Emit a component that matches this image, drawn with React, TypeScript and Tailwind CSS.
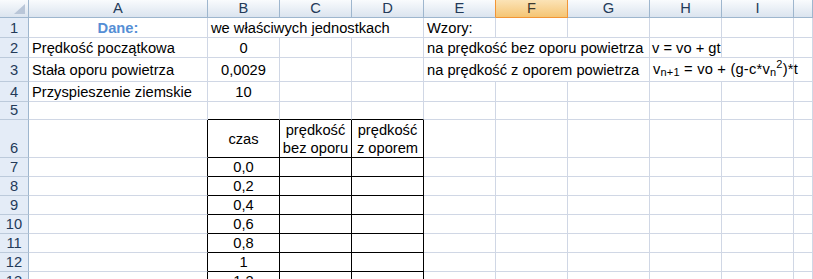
import React from "react";

const H =
  "flex items-center justify-center border-r border-b border-[#9eb6ce] bg-linear-to-b from-[#f9fbfd] to-[#dbe4ef] text-[#233a59] leading-none";
const HF =
  "flex items-center justify-center border-r border-b border-[#f29536] bg-linear-to-b from-[#fbe3b6] to-[#f5c573] text-[#3d3a2f] leading-none";
const HE =
  "flex items-center justify-center border-r border-b border-r-[#f29536] border-b-[#9eb6ce] bg-linear-to-b from-[#f9fbfd] to-[#dbe4ef] text-[#233a59] leading-none";
const R =
  "flex items-end justify-center border-r border-b border-r-[#9eb6ce] border-b-[#bccadb] bg-[#e4ecf7] text-[#233a59] leading-[17px]";
const R3 =
  "flex items-end justify-center border-r border-b border-r-[#9eb6ce] border-b-[#bccadb] bg-[#e4ecf7] text-[#233a59] leading-[17px] pb-[2px]";
const G =
  "flex items-end border-r border-b border-[#d0d7e5] leading-[17px] px-[3px] whitespace-nowrap overflow-hidden";
const G3 =
  "flex items-end border-r border-b border-[#d0d7e5] leading-[17px] px-[3px] pb-[2px] whitespace-nowrap overflow-hidden";
const GF =
  "col-span-2 flex items-end border-r border-b border-[#d0d7e5] leading-[17px] pl-[3px] pb-[2px] whitespace-nowrap";
const GC =
  "flex items-end justify-center border-r border-b border-[#d0d7e5] leading-[17px] whitespace-nowrap overflow-hidden";
const GC3 =
  "flex items-end justify-center border-r border-b border-[#d0d7e5] leading-[17px] pb-[2px] whitespace-nowrap overflow-hidden";
const AL = "border-r border-b border-r-black border-b-[#d0d7e5]";
const TOP = "border-r border-b border-r-[#d0d7e5] border-b-black";
const T =
  "flex items-end justify-center border-r border-b border-black leading-[17px] whitespace-nowrap overflow-hidden";
const TH =
  "flex items-center justify-center text-center border-r border-b border-black leading-[18px]";

function Empty({ n }: { n: number }) {
  return (
    <>
      {Array.from({ length: n }).map((_, i) => (
        <div key={i} className={G} />
      ))}
    </>
  );
}

const times = ["0,0", "0,2", "0,4", "0,6", "0,8", "1", "1,2"];

export default function App() {
  return (
    <div className="w-[813px] h-[279px] overflow-hidden bg-white font-['Liberation_Sans',Arial,sans-serif] text-[14.7px] text-black">
      <div className="grid w-[813px] grid-cols-[29px_179px_72px_72px_72px_72px_72px_82px_72px_72px_1fr] grid-rows-[18px_20px_20px_24px_20px_18px_38px_19px_19px_19px_19px_19px_19px_19px]">
        {/* header row */}
        <div className="relative border-r border-b border-[#9eb6ce] bg-linear-to-b from-[#f9fbfd] to-[#dbe4ef]">
          <svg className="absolute left-0 top-0" width="28" height="17" viewBox="0 0 28 17">
            <polygon points="25,4 25,14 14,14" fill="#b9c6d8" />
          </svg>
        </div>
        <div className={H}>A</div>
        <div className={H}>B</div>
        <div className={H}>C</div>
        <div className={H}>D</div>
        <div className={HE}>E</div>
        <div className={HF}>F</div>
        <div className={H}>G</div>
        <div className={H}>H</div>
        <div className={H}>I</div>
        <div className={H}></div>

        {/* row 1 */}
        <div className={R}>1</div>
        <div className={GC + " font-bold text-[#558ed5]"}>Dane:</div>
        <div className={G + " col-span-3"}>we właściwych jednostkach</div>
        <div className={G}>Wzory:</div>
        <Empty n={5} />

        {/* row 2 */}
        <div className={R}>2</div>
        <div className={G}>Prędkość początkowa</div>
        <div className={GC}>0</div>
        <Empty n={2} />
        <div className={G + " col-span-3"}>na prędkość bez oporu powietrza</div>
        <div className={G + " pl-[2px]"}>v = vo + gt</div>
        <Empty n={2} />

        {/* row 3 */}
        <div className={R3}>3</div>
        <div className={G3}>Stała oporu powietrza</div>
        <div className={GC3}>0,0029</div>
        <Empty n={2} />
        <div className={G3 + " col-span-3"}>na prędkość z oporem powietrza</div>
        <div className={GF}>
          <span className="tracking-[0.2px]">
            v<span className="relative top-[2px] text-[11px]">n+1</span> = vo + (g-c*v
            <span className="relative top-[2px] text-[11px]">n</span>
            <span className="relative -top-[6px] text-[11px]">2</span>)*t
          </span>
        </div>
        <div className={G3} />

        {/* row 4 */}
        <div className={R}>4</div>
        <div className={G}>Przyspieszenie ziemskie</div>
        <div className={GC}>10</div>
        <Empty n={8} />

        {/* row 5 */}
        <div className={R}>5</div>
        <div className={G} />
        <div className={TOP} />
        <div className={TOP} />
        <div className={TOP} />
        <Empty n={6} />

        {/* row 6 */}
        <div className={R}>6</div>
        <div className={AL} />
        <div className={TH}>czas</div>
        <div className={TH}>
          prędkość
          <br />
          bez oporu
        </div>
        <div className={TH}>
          prędkość
          <br />z oporem
        </div>
        <Empty n={6} />

        {/* rows 7-13 */}
        {times.map((t, i) => (
          <React.Fragment key={t}>
            <div className={R}>{i + 7}</div>
            <div className={AL} />
            <div className={T}>{t}</div>
            <div className={T} />
            <div className={T} />
            <Empty n={6} />
          </React.Fragment>
        ))}
      </div>
    </div>
  );
}
